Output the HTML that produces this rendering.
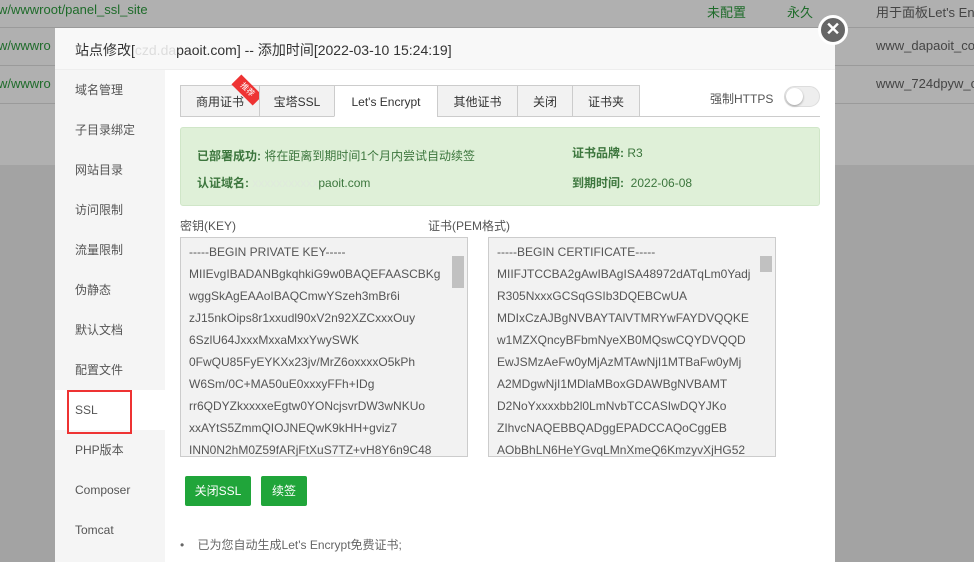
<!DOCTYPE html>
<html><head><meta charset="utf-8"><style>
*{margin:0;padding:0;box-sizing:border-box}
body{width:974px;height:562px;overflow:hidden;position:relative;background:#a3a3a3;font-family:"Liberation Sans","Noto Sans CJK SC",sans-serif;font-size:12px;color:#555}
.bg{position:absolute;left:0;top:0;width:974px;height:165px;background:#b0b0b0}
.row{position:absolute;left:0;width:974px;border-bottom:1px solid #9a9a9a;color:#1e6b2a;font-size:13px}
.abs{position:absolute;white-space:nowrap}
.dlg{position:absolute;left:55px;top:28px;width:780px;height:534px;background:#fff}
.hd{position:absolute;left:0;top:0;width:780px;height:42px;background:#f8f8f8;border-bottom:1px solid #eee;font-size:14px;color:#333;padding:12px 0 0 20px}
.side{position:absolute;left:0;top:42px;width:110px;height:492px;background:#f5f5f5}
.side div{height:40px;line-height:40px;padding-left:20px;font-size:12px;color:#555}
.tab{position:absolute;top:85px;height:32px;line-height:32px;text-align:center;border:1px solid #ccc;background:#f2f2f2;font-size:12px;color:#333}
.ta{position:absolute;top:237px;height:220px;border:1px solid #ccc;background:#f2f2f2;font-size:12px;color:#555;line-height:22px;padding:3px 0 0 8px;overflow:hidden}
.btn{position:absolute;top:476px;height:30px;line-height:30px;background:#20a53a;color:#fff;border-radius:2px;text-align:center;font-size:12px}
</style></head><body>
<div class="bg"></div>
<div class="row" style="top:0;height:28px"><span class="abs" style="left:-2px;top:2px">w/wwwroot/panel_ssl_site</span><span class="abs" style="left:707px;top:2px">未配置</span><span class="abs" style="left:787px;top:2px">永久</span><span class="abs" style="left:876px;top:2px;color:#444">用于面板Let's Enc</span></div>
<div class="row" style="top:28px;height:38px"><span class="abs" style="left:-2px;top:10px">w/wwwro</span><span class="abs" style="left:876px;top:10px;color:#444">www_dapaoit_co</span></div>
<div class="row" style="top:66px;height:38px"><span class="abs" style="left:-2px;top:10px">w/wwwro</span><span class="abs" style="left:876px;top:10px;color:#444">www_724dpyw_c</span></div>
<div class="dlg">
<div class="hd">站点修改[<span style="color:#ddd">czd.da</span>paoit.com] -- 添加时间[2022-03-10 15:24:19]</div>
<div class="side"><div>域名管理</div><div>子目录绑定</div><div>网站目录</div><div>访问限制</div><div>流量限制</div><div>伪静态</div><div>默认文档</div><div>配置文件</div><div style="background:#fff">SSL</div><div>PHP版本</div><div>Composer</div><div>Tomcat</div></div>
</div>
<div class="abs" style="left:67px;top:390px;width:65px;height:44px;border:2px solid #e33"></div>
<div class="tab" style="left:180px;width:80px">商用证书</div>
<div class="abs" style="left:232px;top:83px;width:30px;height:14px;background:#e33;transform:rotate(45deg);color:#fff;font-size:8px;text-align:center;line-height:14px">推荐</div>
<div class="tab" style="left:259px;width:76px">宝塔SSL</div>
<div class="tab" style="left:334px;width:104px;background:#fff;border-bottom-color:#fff">Let's Encrypt</div>
<div class="tab" style="left:437px;width:81px">其他证书</div>
<div class="tab" style="left:517px;width:56px">关闭</div>
<div class="tab" style="left:572px;width:68px">证书夹</div>
<div class="abs" style="left:180px;top:116px;width:153px;border-top:1px solid #ccc"></div>
<div class="abs" style="left:438px;top:116px;width:382px;border-top:1px solid #ccc"></div>
<div class="abs" style="left:710px;top:90px;color:#555">强制HTTPS</div>
<div class="abs" style="left:784px;top:86px;width:36px;height:21px;border-radius:11px;background:#eee;border:1px solid #ddd"><div style="position:absolute;left:1px;top:1px;width:17px;height:17px;border-radius:50%;background:#fff;box-shadow:0 1px 2px #999"></div></div>
<div class="abs" style="left:180px;top:127px;width:640px;height:79px;background:#dff0d8;border:1px solid #d0e6c8;border-radius:3px;color:#3c763d;font-size:12px">
<span class="abs" style="left:16px;top:19px"><b>已部署成功:</b> 将在距离到期时间1个月内尝试自动续签</span>
<span class="abs" style="left:16px;top:46px"><b>认证域名:</b> <span style="color:#dfe9dc">xxxxxxxxxxx</span>paoit.com</span>
<span class="abs" style="left:391px;top:16px"><b>证书品牌:</b> R3</span>
<span class="abs" style="left:391px;top:46px"><b>到期时间:</b>&nbsp;&nbsp;2022-06-08</span>
</div>
<div class="abs" style="left:180px;top:217px">密钥(KEY)</div>
<div class="abs" style="left:428px;top:217px">证书(PEM格式)</div>
<div class="ta" style="left:180px;width:288px">-----BEGIN PRIVATE KEY-----<br>MIIEvgIBADANBgkqhkiG9w0BAQEFAASCBKg<br>wggSkAgEAAoIBAQCmwYSzeh3mBr6i<br>zJ15nkOips8r1xxudl90xV2n92XZCxxxOuy<br>6SzlU64JxxxMxxaMxxYwySWK<br>0FwQU85FyEYKXx23jv/MrZ6oxxxxO5kPh<br>W6Sm/0C+MA50uE0xxxyFFh+IDg<br>rr6QDYZkxxxxeEgtw0YONcjsvrDW3wNKUo<br>xxAYtS5ZmmQIOJNEQwK9kHH+gviz7<br>INN0N2hM0Z59fARjFtXuS7TZ+vH8Y6n9C48</div>
<div class="abs" style="left:452px;top:256px;width:12px;height:32px;background:#c1c1c1"></div>
<div class="ta" style="left:488px;width:288px">-----BEGIN CERTIFICATE-----<br>MIIFJTCCBA2gAwIBAgISA48972dATqLm0Yadj<br>R305NxxxGCSqGSIb3DQEBCwUA<br>MDIxCzAJBgNVBAYTAlVTMRYwFAYDVQQKE<br>w1MZXQncyBFbmNyeXB0MQswCQYDVQQD<br>EwJSMzAeFw0yMjAzMTAwNjI1MTBaFw0yMj<br>A2MDgwNjI1MDlaMBoxGDAWBgNVBAMT<br>D2NoYxxxxbb2l0LmNvbTCCASIwDQYJKo<br>ZIhvcNAQEBBQADggEPADCCAQoCggEB<br>AObBhLN6HeYGvqLMnXmeQ6KmzyvXjHG52</div>
<div class="abs" style="left:760px;top:256px;width:12px;height:16px;background:#c1c1c1"></div>
<div class="btn" style="left:185px;width:66px">关闭SSL</div>
<div class="btn" style="left:261px;width:46px">续签</div>
<div class="abs" style="left:180px;top:536px;color:#666">•&nbsp;&nbsp;&nbsp;&nbsp;已为您自动生成Let's Encrypt免费证书;</div>
<div class="abs" style="left:818px;top:15px;width:30px;height:30px;border-radius:50%;background:#666;border:3px solid #fff;color:#fff;font-size:18px;line-height:23px;text-align:center;font-weight:bold">✕</div>
</body></html>
